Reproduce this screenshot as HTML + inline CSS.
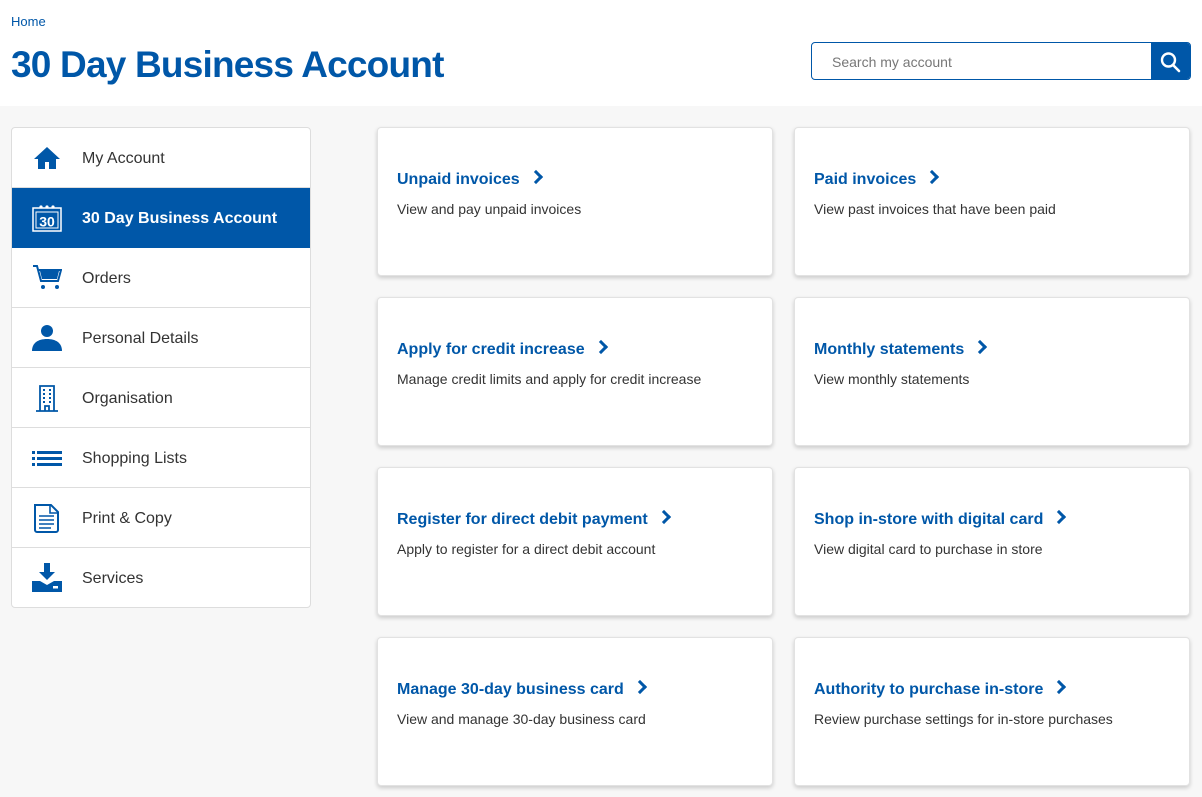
<!DOCTYPE html>
<html><head><meta charset="utf-8"><style>
*{box-sizing:border-box;margin:0;padding:0}
body{width:1202px;height:797px;overflow:hidden;background:#f7f7f7;font-family:"Liberation Sans",Arial,sans-serif;color:#333}
.hdr{background:#fff;height:106px;position:relative}
.crumb{position:absolute;left:11px;top:14px;font-size:13px;color:#0057a8}
h1{position:absolute;left:11px;top:44px;font-size:37px;font-weight:bold;color:#0057a8;letter-spacing:-0.8px}
.search{position:absolute;left:811px;top:42px;width:380px;height:38px;border:1px solid #0057a8;border-radius:4px;background:#fff;overflow:hidden}
.search span{position:absolute;left:20px;top:11px;font-size:14px;color:#777}
.search .btn{position:absolute;right:0;top:0;width:39px;height:38px;background:#0057a8}
.side{position:absolute;left:11px;top:127px;width:300px;height:481px;background:#fff;border:1px solid #ddd;border-radius:4px;overflow:hidden}
.it{height:60px;border-bottom:1px solid #ddd;position:relative;font-size:16px;color:#333}
.it:last-child{border-bottom:none}
.it .t{position:absolute;left:70px;top:22px}
.it svg{position:absolute;left:20px;top:15px}
.it.act{background:#0057a8;color:#fff;font-weight:bold;border-bottom:none;height:60px}
.card{position:absolute;width:396px;height:149px;background:#fff;border:1px solid #e2e2e2;border-radius:4px;box-shadow:0 2px 4px rgba(0,0,0,.18)}
.card b{position:absolute;left:19px;top:43px;font-size:16px;color:#0057a8}
.card b:after{content:"";display:inline-block;width:7px;height:7px;border-right:3px solid #0057a8;border-top:3px solid #0057a8;transform:rotate(45deg);margin-left:11px;position:relative;top:-2px}
.card p{position:absolute;left:19px;top:73px;font-size:14px;color:#333}
</style></head><body>
<div class="hdr">
<div class="crumb">Home</div>
<h1>30 Day Business Account</h1>
<div class="search"><span>Search my account</span><div class="btn"><svg width="39" height="38" viewBox="0 0 39 38"><circle cx="17.5" cy="17" r="6.5" fill="none" stroke="#fff" stroke-width="2.4"/><path d="M22 22l6 6" stroke="#fff" stroke-width="2.6" stroke-linecap="round"/></svg></div></div>
</div>
<div class="side">
<div class="it"><svg width="30" height="30" viewBox="0 0 30 30"><path d="M15 4L2 16h4v10h7v-7h4v7h7V16h4z" fill="#0057a8"/></svg><span class="t">My Account</span></div>
<div class="it act"><svg width="30" height="30" viewBox="0 0 30 30"><rect x="1" y="5" width="28" height="23" fill="none" stroke="#fff" stroke-width="1.5"/><rect x="4" y="9" width="22" height="16" fill="none" stroke="#fff" stroke-width="1"/><circle cx="9" cy="4" r="1.6" fill="#fff"/><circle cx="15" cy="4" r="1.6" fill="#fff"/><circle cx="21" cy="4" r="1.6" fill="#fff"/><text x="15" y="23.5" font-size="14" font-weight="bold" fill="#fff" text-anchor="middle" font-family="Liberation Sans">30</text></svg><span class="t">30 Day Business Account</span></div>
<div class="it"><svg width="30" height="30" viewBox="0 0 30 30"><path d="M1 3h4l4 15h17l3-11H7" fill="none" stroke="#0057a8" stroke-width="2"/><path d="M8 8h19l-2 8H10z" fill="#0057a8"/><circle cx="11" cy="24" r="2" fill="#0057a8"/><circle cx="25" cy="24" r="2" fill="#0057a8"/></svg><span class="t">Orders</span></div>
<div class="it"><svg width="30" height="30" viewBox="0 0 30 30"><circle cx="15" cy="8" r="6" fill="#0057a8"/><path d="M0 28c0-8 6-12 15-12s15 4 15 12z" fill="#0057a8"/></svg><span class="t">Personal Details</span></div>
<div class="it"><svg width="30" height="30" viewBox="0 0 30 30"><path d="M8 28V3h14v25M4 28h22M13 28v-5h4v5" fill="none" stroke="#0057a8" stroke-width="1.8"/><g fill="#0057a8"><rect x="11" y="6" width="2" height="2"/><rect x="17" y="6" width="2" height="2"/><rect x="11" y="10" width="2" height="2"/><rect x="17" y="10" width="2" height="2"/><rect x="11" y="14" width="2" height="2"/><rect x="17" y="14" width="2" height="2"/><rect x="11" y="18" width="2" height="2"/><rect x="17" y="18" width="2" height="2"/></g></svg><span class="t">Organisation</span></div>
<div class="it"><svg width="30" height="30" viewBox="0 0 30 30"><g fill="#0057a8"><rect x="0" y="8" width="3" height="3"/><rect x="5" y="8" width="25" height="3"/><rect x="0" y="14" width="3" height="3"/><rect x="5" y="14" width="25" height="3"/><rect x="0" y="20" width="3" height="3"/><rect x="5" y="20" width="25" height="3"/></g></svg><span class="t">Shopping Lists</span></div>
<div class="it"><svg width="30" height="30" viewBox="0 0 30 30"><path d="M3 2h16l7 7v18a2 2 0 0 1-2 2H5a2 2 0 0 1-2-2z" fill="none" stroke="#0057a8" stroke-width="2"/><path d="M18 2v8h8M7 13h15M7 17h15M7 21h15M7 25h12" stroke="#0057a8" stroke-width="1.6" fill="none"/></svg><span class="t">Print &amp; Copy</span></div>
<div class="it"><svg width="30" height="30" viewBox="0 0 30 30"><path d="M12 0h6v9h5l-8 8-8-8h5z" fill="#0057a8"/><path d="M0 18h8l7 4 7-4h8v11H0z" fill="#0057a8"/><rect x="21" y="23" width="5" height="2.5" fill="#fff"/></svg><span class="t">Services</span></div>
</div>
<div class="card" style="left:377px;top:127px"><b>Unpaid invoices</b><p>View and pay unpaid invoices</p></div>
<div class="card" style="left:794px;top:127px"><b>Paid invoices</b><p>View past invoices that have been paid</p></div>
<div class="card" style="left:377px;top:297px"><b>Apply for credit increase</b><p>Manage credit limits and apply for credit increase</p></div>
<div class="card" style="left:794px;top:297px"><b>Monthly statements</b><p>View monthly statements</p></div>
<div class="card" style="left:377px;top:467px"><b>Register for direct debit payment</b><p>Apply to register for a direct debit account</p></div>
<div class="card" style="left:794px;top:467px"><b>Shop in-store with digital card</b><p>View digital card to purchase in store</p></div>
<div class="card" style="left:377px;top:637px"><b>Manage 30-day business card</b><p>View and manage 30-day business card</p></div>
<div class="card" style="left:794px;top:637px"><b>Authority to purchase in-store</b><p>Review purchase settings for in-store purchases</p></div>
</body></html>
